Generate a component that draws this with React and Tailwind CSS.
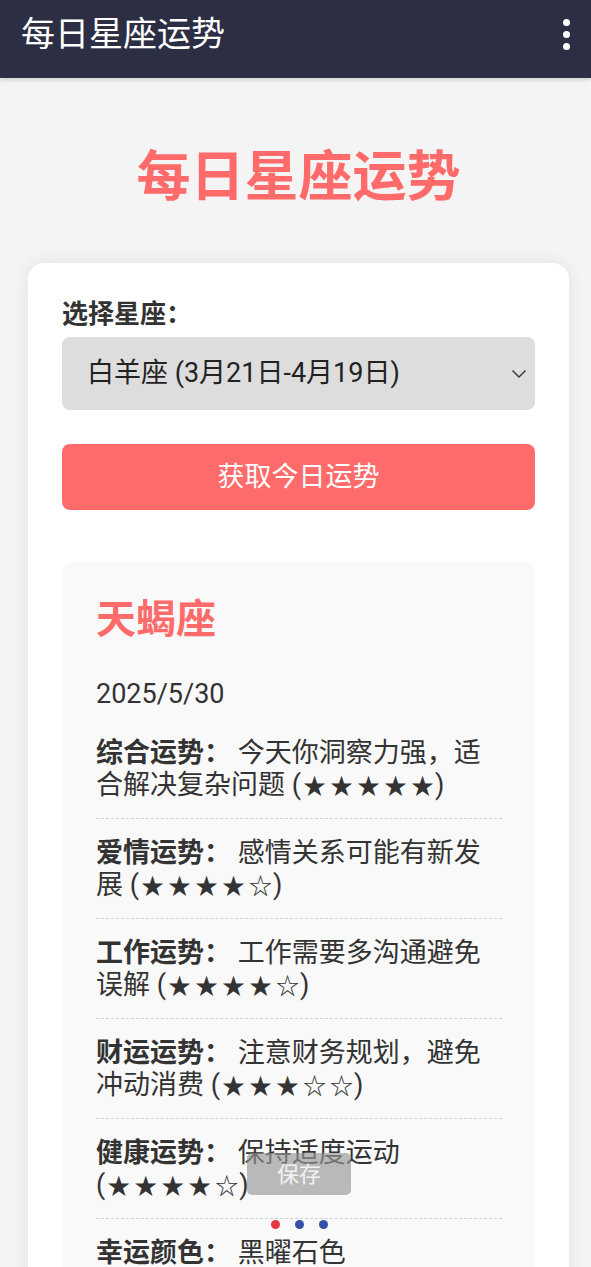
import { useState } from 'react';

const fortunes = [
  { label: '综合运势', text: '今天你洞察力强，适合解决复杂问题', stars: 5 },
  { label: '爱情运势', text: '感情关系可能有新发展', stars: 4 },
  { label: '工作运势', text: '工作需要多沟通避免误解', stars: 4 },
  { label: '财运运势', text: '注意财务规划，避免冲动消费', stars: 3 },
  { label: '健康运势', text: '保持适度运动', stars: 4 },
  { label: '幸运颜色', text: '黑曜石色' },
  { label: '幸运数字', text: '8' },
];

function Stars({ count }) {
  const s = '★★★★★'.slice(0, count) + '☆☆☆☆☆'.slice(0, 5 - count);
  return (
    <span className="whitespace-nowrap">
      (<span className="mr-[-3px] pl-[2px] font-['Noto_Sans_CJK_SC',sans-serif] text-[23px] leading-none tracking-[4px]">{s}</span>)
    </span>
  );
}

export default function App() {
  const [sign, setSign] = useState('aries');

  return (
    <div className="relative min-h-screen bg-[#f4f4f4] font-['Roboto','Noto_Sans_CJK_SC',sans-serif] text-[#333]">
      <header className="flex h-[78px] items-center justify-between bg-[#2c2e43] pb-[10px] pl-[21px] pr-[21px] shadow-[0_2px_4px_rgba(0,0,0,0.15)]">
        <h1 className="text-[34px] font-normal leading-none text-white">每日星座运势</h1>
        <div className="flex flex-col items-center gap-[5px]">
          <span className="h-[7px] w-[7px] rounded-full bg-white" />
          <span className="h-[7px] w-[7px] rounded-full bg-white" />
          <span className="h-[7px] w-[7px] rounded-full bg-white" />
        </div>
      </header>

      <main className="pb-[40px] pl-[28px] pr-[22px]">
        <h2 className="pb-[53px] pt-[68px] text-center text-[54px] font-bold leading-[64px] text-[#ff6b6b]">每日星座运势</h2>

        <section className="rounded-[16px] bg-white px-[34px] pb-[34px] pt-[35px] shadow-[0_0_18px_rgba(0,0,0,0.08)]">
          <label className="block text-[26px] font-bold leading-[32px]">选择星座：</label>
          <div className="relative mt-[7px]">
            <select
              value={sign}
              onChange={(e) => setSign(e.target.value)}
              className="block h-[73px] w-full appearance-none rounded-[8px] bg-[#dddddd] pl-[25px] text-[27px] text-[#222] outline-none"
            >
              <option value="aries">白羊座 (3月21日-4月19日)</option>
              <option value="taurus">金牛座 (4月20日-5月20日)</option>
              <option value="scorpio">天蝎座 (10月23日-11月21日)</option>
            </select>
            <svg className="pointer-events-none absolute right-[8px] top-[32px]" width="16" height="10" viewBox="0 0 16 10" fill="none">
              <path d="M1.5 1.5L8 8L14.5 1.5" stroke="#333" strokeWidth="1.4" />
            </svg>
          </div>

          <button className="mt-[34px] block h-[66px] w-full rounded-[8px] bg-[#ff6b6b] text-[27px] text-white">获取今日运势</button>

          <div className="mt-[52px] rounded-[10px] bg-[#f9f9f9] pb-[10px] pl-[34px] pr-[33px] pt-[34px]">
            <h3 className="text-[40px] font-bold leading-[47px] text-[#ff6b6b]">天蝎座</h3>
            <p className="mt-[35px] text-[27px] leading-[32px]">2025/5/30</p>
            <div className="mt-[9px]">
              {fortunes.map((f, i) => (
                <div
                  key={f.label}
                  className={`py-[17.5px] text-[27px] leading-[32px] ${i < fortunes.length - 1 ? 'border-b border-dashed border-[#d2d2d2]' : ''}`}
                >
                  <strong className="font-bold">{f.label}：</strong> {f.text}
                  {f.stars !== undefined && (
                    <>
                      {' '}
                      <Stars count={f.stars} />
                    </>
                  )}
                </div>
              ))}
            </div>
          </div>
        </section>
      </main>

      <button className="absolute left-[247px] top-[1153px] h-[42px] w-[104px] rounded-[5px] bg-[rgba(150,150,150,0.65)] text-[22px] text-[#f2f2f2]">保存</button>
      <div className="absolute left-[271px] top-[1220px] flex gap-[15px]">
        <span className="h-[9px] w-[9px] rounded-full bg-[#e53940]" />
        <span className="h-[9px] w-[9px] rounded-full bg-[#3550a8]" />
        <span className="h-[9px] w-[9px] rounded-full bg-[#3550a8]" />
      </div>
    </div>
  );
}
